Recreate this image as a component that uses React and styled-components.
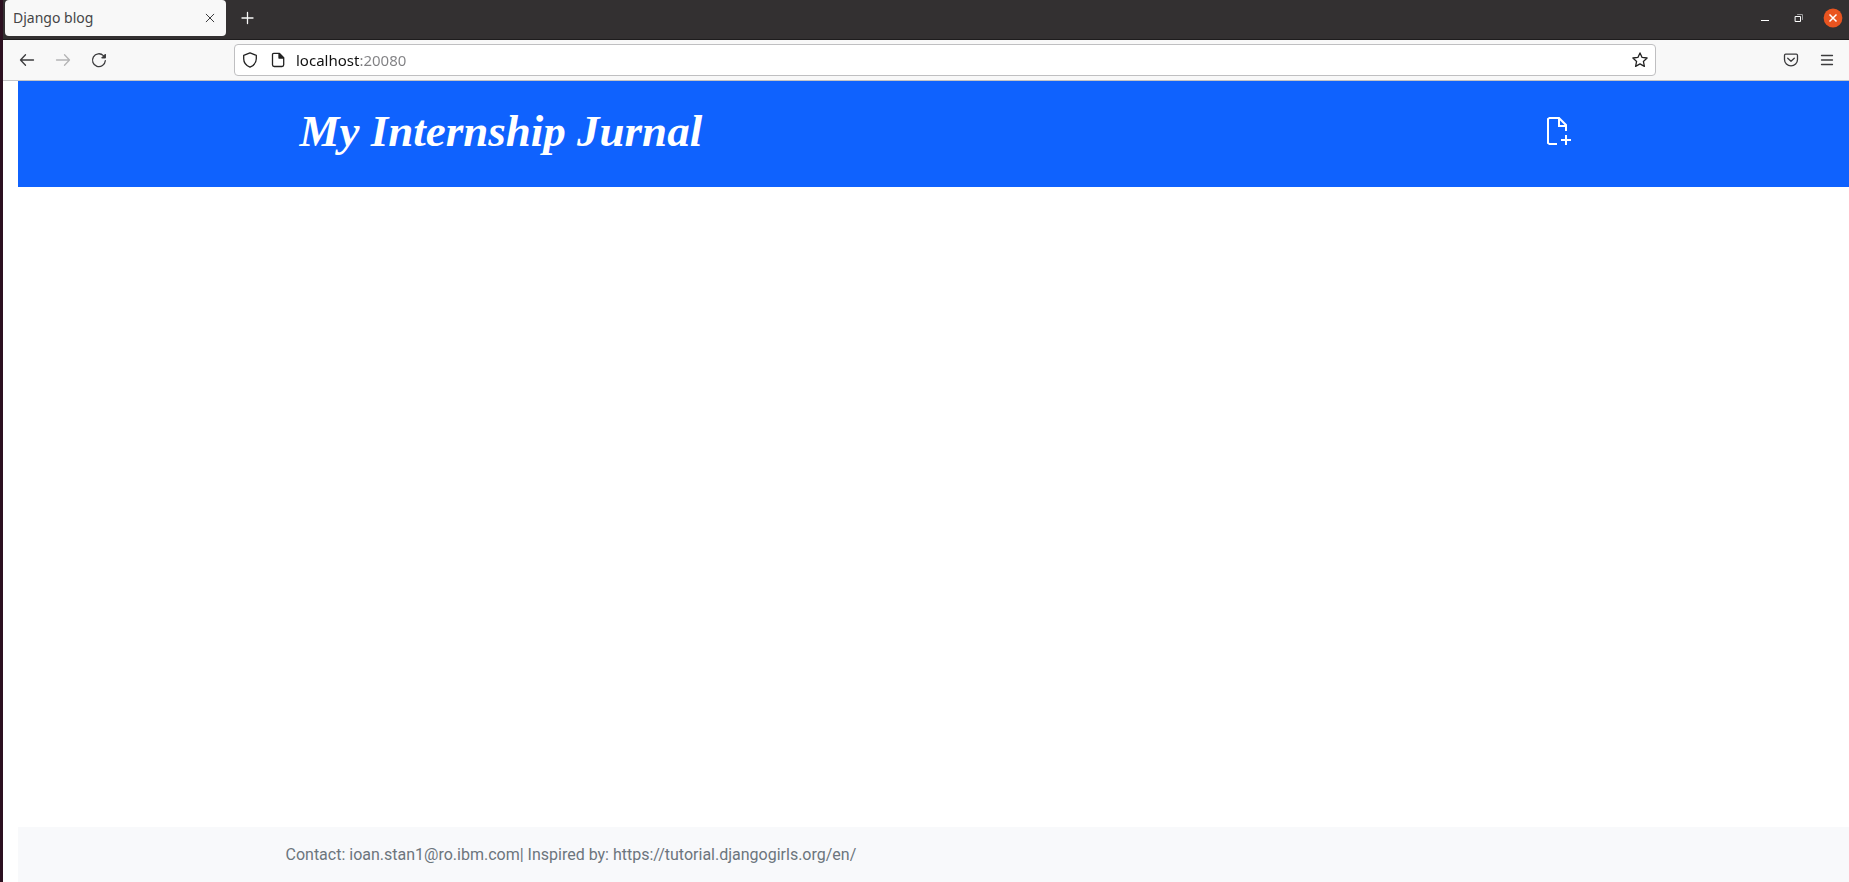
import React from "react";
import styled, { createGlobalStyle } from "styled-components";

const GlobalStyle = createGlobalStyle`
  *, *::before, *::after { box-sizing: border-box; }
  body { margin: 0; background: #fff; font-family: "Noto Sans", "Open Sans", sans-serif; }
  button, input { font: inherit; }
`;

const Window = styled.div`
  display: flex;
  flex-direction: column;
  min-height: 100vh;
  border-left: 3px solid #2c1020;
  overflow: hidden;
`;

const TabStrip = styled.header`
  display: flex;
  align-items: flex-start;
  height: 40px;
  padding-left: 2px;
  background: #333031;
  border-bottom: 1px solid #1e1c1d;
`;

const Tab = styled.div`
  display: flex;
  align-items: center;
  justify-content: space-between;
  width: 221px;
  height: 36px;
  padding: 0 4px 0 8px;
  border-radius: 4px;
  background: #f8f8f8;
  color: #454547;
  font-size: 14px;
  line-height: 20px;
`;

const IconButton = styled.button`
  display: flex;
  flex: none;
  align-items: center;
  justify-content: center;
  width: ${(p) => p.$size || 36}px;
  height: ${(p) => p.$size || 36}px;
  padding: 0;
  border: 0;
  background: none;
  color: ${(p) => p.$color || "#3b3b3d"};
`;

const NewTab = styled.div`
  margin-left: 4px;
`;

const WindowControls = styled.div`
  display: flex;
  align-items: center;
  margin-left: auto;
  height: 36px;
  gap: 10px;
  padding-right: 4px;
`;

const Toolbar = styled.nav`
  display: flex;
  align-items: center;
  height: 41px;
  padding: 0 4px 0 6px;
  background: #f8f8f8;
  border-bottom: 1px solid #c4c4c6;
`;

const FlexSpace = styled.div`
  flex: 0 1 117px;
`;

const AddressBar = styled.form`
  display: flex;
  flex: 1;
  align-items: center;
  gap: 4px;
  height: 32px;
  margin: 0;
  padding: 0 3px;
  border: 1px solid #bfbfc1;
  border-radius: 4px;
  background: #fff;
`;

const AddressInput = styled.input`
  flex: 1;
  min-width: 0;
  height: 28px;
  padding: 0 0 0 2px;
  border: 0;
  outline: 0;
  background: linear-gradient(90deg, #111 66px, #808083 66px);
  background-clip: text;
  -webkit-text-fill-color: transparent;
  font-size: 15px;
  line-height: 20px;
`;

const Page = styled.div`
  display: flex;
  flex: 1;
  flex-direction: column;
  padding-left: 15px;
`;

const Container = styled.div`
  display: flex;
  align-items: center;
  justify-content: space-between;
  width: 100%;
  max-width: 1320px;
  margin: 0 auto;
  padding: 0 12px;
`;

const Banner = styled.header`
  padding: 20px 0 26px;
  background: #0f62fe;
`;

const Title = styled.h1`
  margin: 0;
  padding-left: 14px;
  font-family: "Liberation Serif", serif;
  font-size: 45px;
  font-style: italic;
  font-weight: 700;
  line-height: 60px;
`;

const PageLink = styled.a`
  color: #fff;
  text-decoration: none;
`;

const NewPostLink = styled(PageLink)`
  display: flex;
  padding-right: 9px;
`;

const Content = styled.main`
  flex: 1;
`;

const Footer = styled.footer`
  padding: 16px 0 15px;
  background: #f8f9fb;
`;

const FooterText = styled.span`
  color: #6c757d;
  font-family: Roboto, "Noto Sans", sans-serif;
  font-size: 16px;
  line-height: 24px;
`;

function Icon({ size = 16, stroke = "1.3", children }) {
  return (
    <svg width={size} height={size} viewBox="0 0 16 16" fill="none" stroke="currentColor"
      strokeWidth={stroke} strokeLinecap="round" strokeLinejoin="round" aria-hidden="true">
      {children}
    </svg>
  );
}

export default function App() {
  return (
    <>
      <GlobalStyle />
      <Window>
        <TabStrip>
          <Tab>
            <span>Django blog</span>
            <IconButton $size={24} aria-label="Close tab">
              <Icon stroke="1"><path d="M4.2 4.2l7.6 7.6M11.8 4.2l-7.6 7.6" /></Icon>
            </IconButton>
          </Tab>
          <NewTab>
            <IconButton $color="#f8f8f8" aria-label="New tab">
              <Icon stroke="1.3"><path d="M7.5 2.500v11M2 8h11" /></Icon>
            </IconButton>
          </NewTab>
          <WindowControls>
            <IconButton $size={24} $color="#fff" aria-label="Minimize">
              <Icon stroke="1"><path d="M4 10.5h8" strokeLinecap="butt" /></Icon>
            </IconButton>
            <IconButton $size={24} $color="#fff" aria-label="Restore">
              <Icon stroke="1">
                <path d="M4.5 6.5h5v5h-5z" />
                <path d="M6.5 4.5h5v5" stroke="#99989a" />
              </Icon>
            </IconButton>
            <IconButton $size={24} $color="#fff" aria-label="Close window">
              <svg width="20" height="20" viewBox="0 0 20 20" aria-hidden="true">
                <circle cx="10" cy="10" r="9.4" fill="#e95420" />
                <path d="M6.5 6.5l7 7M13.5 6.5l-7 7" stroke="currentColor" strokeWidth="1.5" />
              </svg>
            </IconButton>
          </WindowControls>
        </TabStrip>

        <Toolbar>
          <IconButton aria-label="Back">
            <Icon><path d="M14.5 8h-13M6.5 2.7L1.5 8l5 5.3" /></Icon>
          </IconButton>
          <IconButton $color="#b4b4b5" aria-label="Forward">
            <Icon><path d="M1.5 8h13M9.5 2.7l5 5.3-5 5.3" /></Icon>
          </IconButton>
          <IconButton aria-label="Reload">
            <Icon>
              <path d="M14.3 8.7A6.4 6.4 0 1 1 12.4 3.6" />
              <path d="M14.7 2v4.2h-4.2z" fill="currentColor" stroke="none" />
              <path d="M14.3 2.6v3.2h-3.2z" fill="currentColor" strokeWidth="1" />
            </Icon>
          </IconButton>
          <FlexSpace />
          <AddressBar onSubmit={(e) => e.preventDefault()}>
            <IconButton type="button" $size={24} $color="#222" aria-label="Tracking protection">
              <Icon><path d="M8 .8l6.3 2.5v3.4c0 3.7-2.4 6.8-6.3 8.5-3.9-1.7-6.3-4.8-6.3-8.5V3.3z" /></Icon>
            </IconButton>
            <IconButton type="button" $size={24} $color="#222" aria-label="Site information">
              <Icon>
                <path d="M3.7 1.4h5.8l4.2 4.2v7.2a1.7 1.7 0 0 1-1.7 1.7H4.2a1.7 1.7 0 0 1-1.7-1.7V2.6a1.2 1.2 0 0 1 1.2-1.2z" />
                <path d="M9 1.6v4.5h4.5z" fill="currentColor" />
              </Icon>
            </IconButton>
            <AddressInput aria-label="Address" defaultValue="localhost:20080" spellCheck="false" />
            <IconButton type="button" $size={24} $color="#222" aria-label="Bookmark this page">
              <Icon><path d="M8 .9l2.1 4.5 5 .6-3.7 3.4 1 5L8 11.9l-4.4 2.5 1-5L.9 6l5-.6z" /></Icon>
            </IconButton>
          </AddressBar>
          <FlexSpace />
          <IconButton aria-label="Save to Pocket">
            <Icon>
              <path d="M2.7 2.2h10.6a1.2 1.2 0 0 1 1.2 1.2v4A6.5 6.5 0 0 1 8 13.9a6.5 6.5 0 0 1-6.5-6.5v-4a1.2 1.2 0 0 1 1.2-1.2z" />
              <path d="M4.7 6.2L8 9.3l3.3-3.1" />
            </Icon>
          </IconButton>
          <IconButton aria-label="Open application menu">
            <Icon><path d="M2.5 3.5h11M2.5 8h11M2.5 12.5h11" /></Icon>
          </IconButton>
        </Toolbar>

        <Page>
          <Banner>
            <Container>
              <Title><PageLink href="/">My Internship Jurnal</PageLink></Title>
              <NewPostLink href="/post/new/" aria-label="New post">
                <svg width="30" height="30" viewBox="0 0 30 30" fill="none" stroke="currentColor"
                  strokeWidth="2" aria-hidden="true">
                  <path d="M14 28H6.5L5 27V3l1.5-1H16l7 7v6" />
                  <path d="M16 2v8h7M18 24h10M23 19v10" />
                </svg>
              </NewPostLink>
            </Container>
          </Banner>
          <Content />
          <Footer>
            <Container>
              <FooterText>Contact: ioan.stan1@ro.ibm.com| Inspired by: https://tutorial.djangogirls.org/en/</FooterText>
            </Container>
          </Footer>
        </Page>
      </Window>
    </>
  );
}
